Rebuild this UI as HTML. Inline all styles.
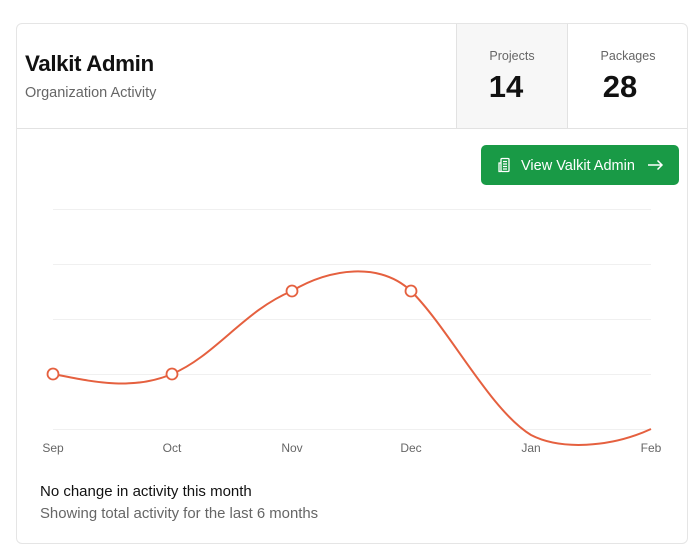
<!DOCTYPE html>
<html><head><style>
body{margin:0;background:#fff;font-family:"Liberation Sans",sans-serif;width:698px;height:556px;position:relative;overflow:hidden}
.card{position:absolute;left:16px;top:23px;width:672px;height:521px;border:1px solid #e5e5e5;border-radius:6px;box-sizing:border-box}
.hdr{position:absolute;left:0;top:0;width:100%;height:104px;border-bottom:1px solid #e2e2e2}
.t{position:absolute;left:8px;top:27px;font-size:22.4px;font-weight:bold;color:#111;letter-spacing:-0.4px}
.s{position:absolute;left:8px;top:61px;font-size:14.5px;color:#666}
.stat{position:absolute;top:0;height:104px;border-left:1px solid #e2e2e2;text-align:center}
.stat .l{font-size:12.5px;color:#666;margin-top:25px}
.stat .v{font-size:31px;font-weight:bold;color:#111;margin-top:6px}
.btn{position:absolute;left:464px;top:121px;width:198px;height:40px;background:#199a46;border-radius:5px;color:#fff;font-size:14.5px;line-height:42px}
</style></head><body>
<div class="card">
<div class="hdr">
<div class="t">Valkit Admin</div>
<div class="s">Organization Activity</div>
<div class="stat" style="left:439px;width:110px;background:#f7f7f7"><div class="l">Projects</div><div class="v" style="margin-right:12px">14</div></div>
<div class="stat" style="left:550px;width:120px"><div class="l">Packages</div><div class="v" style="margin-right:16px">28</div></div>
</div>
<div class="btn">
<svg style="position:absolute;left:16px;top:12px" width="16" height="16" viewBox="0 0 16 16" fill="none" stroke="#fff" stroke-width="1.3"><rect x="4" y="1.5" width="8" height="13" rx="1"/><path d="M4 6H2v8.5h2M6 4.5h4M6 7h4M6 9.5h4M6 12h4"/></svg>
<span style="position:absolute;left:40px">View Valkit Admin</span>
<svg style="position:absolute;left:166px;top:14px" width="17" height="12" viewBox="0 0 17 12" fill="none" stroke="#fff" stroke-width="1.5"><path d="M1 6H15M10.5 1.5L15 6l-4.5 4.5"/></svg>
</div>
</div>
<svg style="position:absolute;left:0;top:0" width="698" height="556">
<g stroke="#f0f0f0" stroke-width="1">
<line x1="53" x2="651" y1="209.5" y2="209.5"/><line x1="53" x2="651" y1="264.5" y2="264.5"/><line x1="53" x2="651" y1="319.5" y2="319.5"/><line x1="53" x2="651" y1="374.5" y2="374.5"/><line x1="53" x2="651" y1="429.5" y2="429.5"/>
</g>
<path d="M53,374 C85,380 130,392 172,374 C215,356 245,310 292,291 C330,268 380,262 411,291 C450,330 490,410 531,435 C560,450 610,448 651,429" fill="none" stroke="#e5603f" stroke-width="2"/>
<g fill="#fff" stroke="#e5603f" stroke-width="1.8">
<circle cx="53" cy="374" r="5.5"/><circle cx="172" cy="374" r="5.5"/><circle cx="292" cy="291" r="5.5"/><circle cx="411" cy="291" r="5.5"/>
</g>
<g font-family="Liberation Sans" font-size="12" fill="#666" text-anchor="middle">
<text x="53" y="452">Sep</text><text x="172" y="452">Oct</text><text x="292" y="452">Nov</text><text x="411" y="452">Dec</text><text x="531" y="452">Jan</text><text x="651" y="452">Feb</text>
</g>
<text x="40" y="496" font-family="Liberation Sans" font-size="15" fill="#111">No change in activity this month</text>
<text x="40" y="518" font-family="Liberation Sans" font-size="14.9" fill="#666">Showing total activity for the last 6 months</text>
</svg>
</body></html>
